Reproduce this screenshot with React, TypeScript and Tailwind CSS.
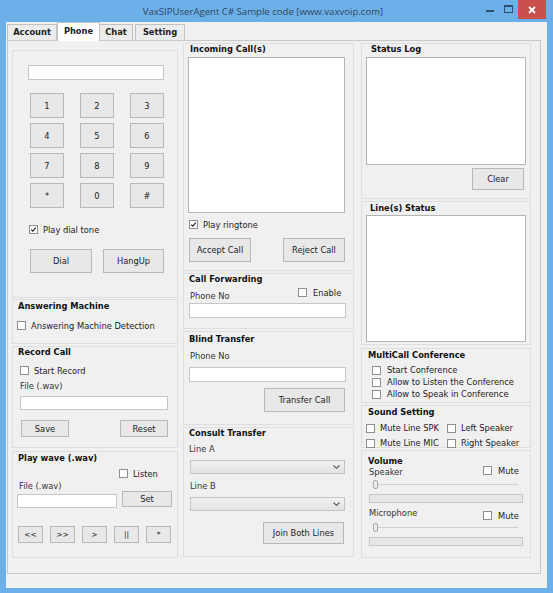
import type { ReactNode } from "react";

// Win8-style "Phone" tab of the VaxSIP sample form
function Check({ on = false }: { on?: boolean }) {
  return (
    <span className="flex h-[9px] w-[9px] shrink-0 items-center justify-center border border-[#8f8f8f] bg-white">
      {on && (
        <svg viewBox="0 0 9 9" className="h-[9px] w-[9px]">
          <path d="M1.6 4.6 L3.6 6.6 L7.4 2.2" fill="none" stroke="#222" strokeWidth="1.5" />
        </svg>
      )}
    </span>
  );
}

function CheckRow({ label, on, className = "" }: { label: string; on?: boolean; className?: string }) {
  return (
    <div className={`flex items-center ${className}`}>
      <Check on={on} />
      <span className="whitespace-nowrap leading-[10px]">{label}</span>
    </div>
  );
}

function Btn({ label, className = "" }: { label: string; className?: string }) {
  return (
    <button
      type="button"
      className={`flex shrink-0 items-center justify-center border border-[#b8b8b8] bg-[#e8e8e8] leading-[10px] text-[#222] ${className}`}
    >
      {label}
    </button>
  );
}

function Field({ className = "" }: { className?: string }) {
  return <div className={`shrink-0 border border-[#c6c6c6] bg-white ${className}`} />;
}

function Combo({ className = "" }: { className?: string }) {
  return (
    <div
      className={`flex shrink-0 items-center justify-end border border-[#c4c4c4] bg-gradient-to-b from-[#f2f2f2] to-[#e2e2e2] pr-[4px] ${className}`}
    >
      <svg viewBox="0 0 7 4" className="h-[4px] w-[7px]">
        <path d="M0.5 0.5 L3.5 3.3 L6.5 0.5" fill="none" stroke="#555" strokeWidth="1.1" />
      </svg>
    </div>
  );
}

function Slider({ className = "" }: { className?: string }) {
  return (
    <div className={`relative h-[9px] shrink-0 ${className}`}>
      <div className="absolute left-0 right-0 top-[4px] h-px bg-[#d0d0d0]" />
      <div className="absolute left-0 top-0 h-[9px] w-[5px] rounded-[2px] border border-[#a9a9a9] bg-[#ececec]" />
    </div>
  );
}

function Bar({ className = "" }: { className?: string }) {
  return <div className={`h-[9px] shrink-0 border border-[#c8c8c8] bg-[#e6e6e6] ${className}`} />;
}

function Caption({ children, className = "" }: { children: ReactNode; className?: string }) {
  return <div className={`h-[10px] whitespace-nowrap font-bold leading-[10px] text-[#111] ${className}`}>{children}</div>;
}

function Label({ children, className = "" }: { children: ReactNode; className?: string }) {
  return <div className={`h-[10px] shrink-0 whitespace-nowrap leading-[10px] text-[#333] ${className}`}>{children}</div>;
}

function Box({ className = "", children }: { className?: string; children: ReactNode }) {
  return <div className={`flex shrink-0 flex-col border border-[#dedede] ${className}`}>{children}</div>;
}

function TitleBar() {
  return (
    <div className="relative h-[22px] shrink-0">
      <div className="flex h-full items-center justify-center pr-[27px] pt-[3px] font-['Open_Sans',sans-serif] text-[9.6px] text-[#33475b]">
        VaxSIPUserAgent C# Sample code [www.vaxvoip.com]
      </div>
      <div className="absolute right-[7px] top-0 flex items-start">
        <div className="mr-[10px] mt-[10px] h-[2px] w-[8px] bg-[#2f4f6f]" />
        <div className="mr-[5px] mt-[5px] h-[8px] w-[9px] border border-t-2 border-[#2f4f6f]" />
        <div className="flex h-[19px] w-[28px] items-center justify-center bg-[#c9504b]">
          <svg viewBox="0 0 8 8" className="h-[8px] w-[8px]">
            <path d="M1 1 L7 7 M7 1 L1 7" stroke="#fff" strokeWidth="1.8" />
          </svg>
        </div>
      </div>
    </div>
  );
}

function Tabs() {
  return (
    <div className="flex h-[18px] shrink-0 items-end pl-[1px] font-bold">
      <div className="flex h-[16px] w-[50px] items-center justify-center border border-b-0 border-[#c2c2c2] bg-[#ececec]">Account</div>
      <div className="relative z-10 -mb-px flex h-[19px] w-[43px] items-center justify-center border border-b-0 border-[#c2c2c2] bg-white pb-[1px]">
        Phone
      </div>
      <div className="flex h-[16px] w-[33px] items-center justify-center border border-b-0 border-l-0 border-[#c2c2c2] bg-[#ececec]">Chat</div>
      <div className="ml-[2px] flex h-[16px] w-[50px] items-center justify-center border border-b-0 border-[#c2c2c2] bg-[#ececec]">Setting</div>
    </div>
  );
}

function LeftColumn() {
  return (
    <div className="mt-[7px] flex w-[166px] shrink-0 flex-col">
      <Box className="h-[248px]">
        <Field className="ml-[15px] mt-[14px] h-[15px] w-[136px]" />
        <div className="ml-[17px] mt-[13px] grid grid-cols-[34px_34px_34px] auto-rows-[25px] gap-x-[16px] gap-y-[5px]">
          {["1", "2", "3", "4", "5", "6", "7", "8", "9", "*", "0", "#"].map((k) => (
            <Btn key={k} label={k} className="h-[25px] w-[34px]" />
          ))}
        </div>
        <CheckRow label="Play dial tone" on className="ml-[16px] mt-[17px] h-[9px] gap-[5px]" />
        <div className="ml-[17px] mt-[15px] flex">
          <Btn label="Dial" className="h-[24px] w-[62px]" />
          <Btn label="HangUp" className="ml-[11px] h-[24px] w-[61px]" />
        </div>
      </Box>

      <Box className="mt-[1px] h-[45px]">
        <Caption className="ml-[5px] mt-[1px]">Answering Machine</Caption>
        <CheckRow label="Answering Machine Detection" className="ml-[4px] mt-[10px] h-[9px] gap-[5px]" />
      </Box>

      <Box className="mt-[2px] h-[102px]">
        <Caption className="ml-[5px]">Record Call</Caption>
        <CheckRow label="Start Record" className="ml-[7px] mt-[9px] h-[9px] gap-[5px]" />
        <Label className="ml-[7px] mt-[6px]">File (.wav)</Label>
        <Field className="ml-[7px] mt-[5px] h-[14px] w-[148px]" />
        <div className="ml-[8px] mt-[10px] flex">
          <Btn label="Save" className="h-[17px] w-[48px]" />
          <Btn label="Reset" className="ml-[51px] h-[17px] w-[48px]" />
        </div>
      </Box>

      <Box className="mt-[3px] h-[107px]">
        <Caption className="ml-[5px] mt-[1px]">Play wave (.wav)</Caption>
        <CheckRow label="Listen" className="ml-[106px] mt-[6px] h-[9px] gap-[5px]" />
        <Label className="ml-[6px] mt-[3px]">File (.wav)</Label>
        <div className="flex items-start">
          <Field className="ml-[4px] mt-[3px] h-[14px] w-[100px]" />
          <Btn label="Set" className="ml-[5px] h-[16px] w-[50px]" />
        </div>
        <div className="ml-[5px] mt-[18px] flex gap-[7px]">
          {["<<", ">>", ">", "||", "*"].map((k) => (
            <Btn key={k} label={k} className="h-[17px] w-[25px] text-[7.5px]" />
          ))}
        </div>
      </Box>
    </div>
  );
}

function MiddleColumn() {
  return (
    <div className="ml-[5px] flex w-[171px] shrink-0 flex-col">
      <Box className="h-[228px]">
        <Caption className="ml-[6px]">Incoming Call(s)</Caption>
        <div className="ml-[4px] mt-[3px] h-[156px] w-[157px] border border-[#b4b4b4] bg-white" />
        <CheckRow label="Play ringtone" on className="ml-[5px] mt-[7px] h-[9px] gap-[5px]" />
        <div className="ml-[5px] mt-[9px] flex">
          <Btn label="Accept Call" className="h-[24px] w-[62px]" />
          <Btn label="Reject Call" className="ml-[32px] h-[24px] w-[62px]" />
        </div>
      </Box>

      <Box className="mt-[2px] h-[56px]">
        <Caption className="ml-[5px]">Call Forwarding</Caption>
        <div className="flex items-start">
          <Label className="ml-[6px] mt-[7px] w-[108px]">Phone No</Label>
          <CheckRow label="Enable" className="mt-[4px] h-[9px] gap-[6px]" />
        </div>
        <Field className="ml-[5px] mt-[2px] h-[15px] w-[157px]" />
      </Box>

      <Box className="mt-[2px] h-[94px]">
        <Caption className="ml-[5px] mt-[2px]">Blind Transfer</Caption>
        <Label className="ml-[6px] mt-[7px]">Phone No</Label>
        <Field className="ml-[5px] mt-[6px] h-[15px] w-[157px]" />
        <Btn label="Transfer Call" className="ml-[80px] mt-[6px] h-[24px] w-[81px]" />
      </Box>

      <Box className="mt-[2px] h-[130px]">
        <Caption className="ml-[5px]">Consult Transfer</Caption>
        <Label className="ml-[5px] mt-[6px]">Line A</Label>
        <Combo className="ml-[6px] mt-[6px] h-[14px] w-[155px]" />
        <Label className="ml-[6px] mt-[7px]">Line B</Label>
        <Combo className="ml-[6px] mt-[6px] h-[14px] w-[155px]" />
        <Btn label="Join Both Lines" className="ml-[79px] mt-[11px] h-[22px] w-[81px]" />
      </Box>
    </div>
  );
}

function RightColumn() {
  return (
    <div className="ml-[7px] flex w-[170px] shrink-0 flex-col">
      <Box className="h-[156px]">
        <Caption className="ml-[9px]">Status Log</Caption>
        <div className="ml-[4px] mt-[3px] h-[108px] w-[160px] border border-[#b4b4b4] bg-white" />
        <Btn label="Clear" className="ml-[110px] mt-[3px] h-[22px] w-[52px]" />
      </Box>

      <Box className="mt-[2px] h-[144px]">
        <Caption className="ml-[8px] mt-[1px]">Line(s) Status</Caption>
        <div className="ml-[4px] mt-[2px] h-[127px] w-[160px] border border-[#b4b4b4] bg-white" />
      </Box>

      <Box className="mt-[3px] h-[55px]">
        <Caption className="ml-[6px] mt-[1px]">MultiCall Conference</Caption>
        <div className="ml-[10px] mt-[4px] flex flex-col">
          <CheckRow label="Start Conference" className="h-[12px] gap-[6px]" />
          <CheckRow label="Allow to Listen the Conference" className="h-[12px] gap-[6px]" />
          <CheckRow label="Allow to Speak in Conference" className="h-[12px] gap-[6px]" />
        </div>
      </Box>

      <Box className="mt-[2px] h-[43px]">
        <Caption className="ml-[6px] mt-[1px]">Sound Setting</Caption>
        <div className="ml-[4px] mt-[5px] grid grid-cols-[81px_80px] auto-rows-[12px] gap-y-[3px]">
          <CheckRow label="Mute Line SPK" className="gap-[5px]" />
          <CheckRow label="Left Speaker" className="gap-[5px]" />
          <CheckRow label="Mute Line MIC" className="gap-[5px]" />
          <CheckRow label="Right Speaker" className="gap-[5px]" />
        </div>
      </Box>

      <Box className="mt-[2px] h-[108px]">
        <Caption className="ml-[6px] mt-[5px]">Volume</Caption>
        <div className="flex items-start">
          <Label className="ml-[7px] mt-[1px] w-[114px]">Speaker</Label>
          <CheckRow label="Mute" className="h-[9px] gap-[6px]" />
        </div>
        <Slider className="ml-[11px] mt-[3px] w-[145px]" />
        <Bar className="ml-[7px] mt-[5px] w-[154px]" />
        <div className="mt-[5px] flex items-start">
          <Label className="ml-[7px] w-[114px]">Microphone</Label>
          <CheckRow label="Mute" className="mt-[3px] h-[9px] gap-[6px]" />
        </div>
        <Slider className="ml-[11px] mt-[3px] w-[145px]" />
        <Bar className="ml-[7px] mt-[5px] w-[154px]" />
      </Box>
    </div>
  );
}

export default function App() {
  return (
    <div className="flex h-[593px] w-[553px] flex-col bg-[#6cb0ea] font-['DejaVu_Sans',sans-serif] text-[8.3px] text-[#222]">
      <TitleBar />
      <div className="mx-[6px] mb-[5px] flex flex-1 flex-col bg-[#f0f0f0]">
        <Tabs />
        <div className="ml-[1px] flex h-[534px] w-[534px] shrink-0 border border-[#c9c9c9] bg-[#f0f0f0] pl-[4px] pt-[2px]">
          <LeftColumn />
          <MiddleColumn />
          <RightColumn />
        </div>
        <div className="flex-1 bg-[#f1f1f1]" />
      </div>
    </div>
  );
}
